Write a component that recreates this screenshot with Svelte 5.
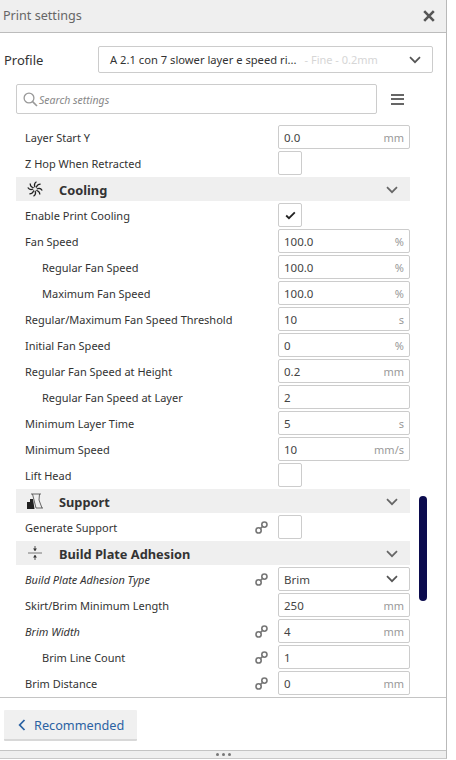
<script>
  const rows = [
    { t: 'field', label: 'Layer Start Y', value: '0.0', unit: 'mm' },
    { t: 'check', label: 'Z Hop When Retracted' },
    { t: 'head', label: 'Cooling', icon: 'fan' },
    { t: 'check', label: 'Enable Print Cooling', checked: true },
    { t: 'field', label: 'Fan Speed', value: '100.0', unit: '%' },
    { t: 'field', label: 'Regular Fan Speed', value: '100.0', unit: '%', sub: true },
    { t: 'field', label: 'Maximum Fan Speed', value: '100.0', unit: '%', sub: true },
    { t: 'field', label: 'Regular/Maximum Fan Speed Threshold', value: '10', unit: 's' },
    { t: 'field', label: 'Initial Fan Speed', value: '0', unit: '%' },
    { t: 'field', label: 'Regular Fan Speed at Height', value: '0.2', unit: 'mm' },
    { t: 'field', label: 'Regular Fan Speed at Layer', value: '2', unit: '', sub: true },
    { t: 'field', label: 'Minimum Layer Time', value: '5', unit: 's' },
    { t: 'field', label: 'Minimum Speed', value: '10', unit: 'mm/s' },
    { t: 'check', label: 'Lift Head' },
    { t: 'head', label: 'Support', icon: 'support' },
    { t: 'check', label: 'Generate Support', link: true },
    { t: 'head', label: 'Build Plate Adhesion', icon: 'adhesion' },
    { t: 'select', label: 'Build Plate Adhesion Type', value: 'Brim', link: true, it: true },
    { t: 'field', label: 'Skirt/Brim Minimum Length', value: '250', unit: 'mm' },
    { t: 'field', label: 'Brim Width', value: '4', unit: 'mm', link: true, it: true },
    { t: 'field', label: 'Brim Line Count', value: '1', unit: '', link: true, sub: true },
    { t: 'field', label: 'Brim Distance', value: '0', unit: 'mm', link: true }
  ];
</script>

{#snippet chevron(cls)}
  <svg class={cls} viewBox="0 0 12 8" width="12" height="8"><path d="M1 1.2 6 6.2 11 1.2" fill="none" stroke="currentColor" stroke-width="1.7"/></svg>
{/snippet}

{#snippet linkIcon()}
  <svg class="link" viewBox="0 0 13 13" width="13" height="13">
    <circle cx="3.6" cy="9.4" r="2.6" fill="none" stroke="#777" stroke-width="1.6"/>
    <circle cx="9.4" cy="3.6" r="2.6" fill="none" stroke="#777" stroke-width="1.6"/>
    <path d="M5 8 8 5" stroke="#777" stroke-width="1.6"/>
  </svg>
{/snippet}

<div class="panel">
  <header class="title">
    <span>Print settings</span>
    <svg viewBox="0 0 12 12" width="12" height="12"><path d="M1.2 1.2 10.8 10.8M10.8 1.2 1.2 10.8" stroke="#555" stroke-width="2.6"/></svg>
  </header>

  <div class="profile">
    <span class="plabel">Profile</span>
    <div class="pselect">
      <span class="pname">A 2.1 con 7 slower layer e speed ri...</span>
      <span class="pq">- Fine - 0.2mm</span>
      {@render chevron('pchev')}
    </div>
  </div>

  <div class="searchrow">
    <div class="search">
      <svg viewBox="0 0 15 15" width="15" height="15"><circle cx="6" cy="6" r="4.9" fill="none" stroke="#999" stroke-width="1.3"/><path d="M9.6 9.6 14 14" stroke="#999" stroke-width="1.6"/></svg>
      <span class="stext">Search settings</span>
    </div>
    <div class="menu"><i></i><i></i><i></i></div>
  </div>

  <div class="list">
    {#each rows as r}
      {#if r.t === 'head'}
        <div class="head">
          <span class="hicon">
            {#if r.icon === 'fan'}
              <svg viewBox="0 0 16 16" width="16" height="16" fill="none" stroke="#222" stroke-width="1.3">
                <path d="M8 6.2C7 4 7.5 2 9.5.8M9.8 8C12 7 14 7.5 15.2 9.5M8 9.8C9 12 8.500 14 6.500 15.200M6.200 8C4 9 2 8.500.8 6.500M9.300 6.700C9.800 4.500 11.200 3.200 13.600 3.200M9.300 9.300C11.500 9.800 12.800 11.200 12.800 13.600M6.700 9.300C6.200 11.500 4.800 12.800 2.400 12.800M6.700 6.700C4.500 6.200 3.200 4.800 3.200 2.400"/>
              </svg>
            {:else if r.icon === 'support'}
              <svg viewBox="0 0 16 16" width="16" height="16"><path d="M4 1H14M5.500 1 7 7 9 15H16M12.500 1 12 7 15 15" fill="none" stroke="#555" stroke-width=".9"/><path d="M0 16V9H3V6H6L7.500 16Z" fill="#222"/></svg>
            {:else}
              <svg viewBox="0 0 16 16" width="16" height="16"><path d="M1 8H15" stroke="#777" stroke-width="1"/><path d="M8 1V6M8 10V15" stroke="#555" stroke-width="1"/><path d="M6 3.500 8 6 10 3.500ZM6 12.500 8 10 10 12.500Z" fill="#333"/></svg>
            {/if}
          </span>
          <span class="htext">{r.label}</span>
          {@render chevron('hchev')}
        </div>
      {:else}
        <div class="row">
          <span class="label" class:sub={r.sub} class:it={r.it}>{r.label}</span>
          {#if r.link}{@render linkIcon()}{/if}
          {#if r.t === 'check'}
            <span class="box">
              {#if r.checked}<svg viewBox="0 0 12 10" width="11" height="9"><path d="M1.200 5 4.300 8 10.800 1.500" fill="none" stroke="#222" stroke-width="2"/></svg>{/if}
            </span>
          {:else if r.t === 'select'}
            <span class="input"><span>{r.value}</span>{@render chevron('schev')}</span>
          {:else}
            <span class="input"><span>{r.value}</span><span class="unit">{r.unit}</span></span>
          {/if}
        </div>
      {/if}
    {/each}
    <div class="thumb"></div>
  </div>

  <footer class="foot">
    <button class="rec">
      <svg viewBox="0 0 8 12" width="8" height="12"><path d="M6.500 1 1.700 6 6.500 11" fill="none" stroke="#2b62a3" stroke-width="1.800"/></svg>
      <span>Recommended</span>
    </button>
  </footer>
  <div class="grip"><i></i><i></i><i></i></div>
</div>

<style>
  :global(body) { margin: 0; background: #fff; }
  .panel {
    width: 447px; height: 759px; box-sizing: border-box;
    border-right: 1px solid #b9b9b9; border-bottom: 1px solid #c9c9c9;
    font-family: "Noto Sans", "Open Sans", sans-serif; color: #333;
    display: flex; flex-direction: column; overflow: hidden; background: #fff;
  }
  .title {
    height: 33px; box-sizing: border-box; flex: none; background: #efefef;
    border-bottom: 1px solid #bcbcbc; display: flex; align-items: center;
    justify-content: space-between; padding: 0 11px 1px 3px;
    font-size: 12.600px; color: #666;
  }
  .profile { flex: none; height: 51px; display: flex; align-items: center; padding: 2px 13px 0 4px; box-sizing: border-box; }
  .plabel { width: 94px; font-size: 13px; color: #333; }
  .pselect {
    flex: 1; height: 27px; box-sizing: border-box; border: 1px solid #ccc; border-radius: 2px;
    display: flex; align-items: center; padding: 0 11px; font-size: 11.200px; position: relative;
  }
  .pname { color: #333; }
  .pq { color: #d6d6d6; margin-left: 8px; font-size: 11px; }
  .pchev { position: absolute; right: 11px; top: 9px; color: #555; }
  .searchrow { flex: none; height: 30px; display: flex; align-items: center; padding-left: 16px; margin-bottom: 10px; }
  .search {
    width: 361px; height: 30px; box-sizing: border-box; border: 1px solid #ccc; border-radius: 2px;
    display: flex; align-items: center; gap: 1px; padding-left: 6px; font-size: 10.500px; font-style: italic; color: #888;
  }
  .stext { padding-top: 1px; }
  .menu { margin-left: 14px; width: 13px; display: flex; flex-direction: column; gap: 2.500px; }
  .menu i { display: block; height: 2px; background: #666; }
  .list { flex: none; height: 574px; overflow: hidden; position: relative; padding-left: 16px; border-bottom: 1px solid #c4c4c4; box-sizing: border-box; }
  .row, .head { height: 26px; width: 394px; box-sizing: border-box; display: flex; align-items: center; }
  .row { padding-left: 9px; font-size: 11px; color: #333; position: relative; }
  .label { flex: 1; white-space: nowrap; }
  .sub { padding-left: 17px; }
  .it { font-style: italic; }
  .link { position: absolute; left: 239px; top: 7px; }
  .input {
    width: 132px; height: 24px; box-sizing: border-box; border: 1px solid #ccc; border-radius: 2px; flex: none;
    display: flex; align-items: center; justify-content: space-between; padding: 0 5px; font-size: 11.500px; color: #444;
  }
  .unit { color: #999; font-size: 11px; }
  .schev { color: #555; margin-right: 6px; }
  .box {
    width: 24px; height: 24px; box-sizing: border-box; border: 1px solid #ccc; border-radius: 2px;
    margin-right: 108px; flex: none; display: flex; align-items: center; justify-content: center;
  }
  .head { background: #efefef; height: 24px; margin: 1px 0; position: relative; font-weight: 700; font-size: 12.800px; color: #333; padding-left: 11px; }
  .hicon { width: 32px; display: flex; }
  .htext { flex: 1; padding-top: 1px; }
  .hchev { position: absolute; right: 12px; top: 9px; color: #666; }
  .thumb { position: absolute; left: 419px; top: 372px; width: 8px; height: 105px; border-radius: 4px; background: #0b0b4e; }
  .foot { flex: none; height: 53px; padding: 12px 0 0 4px; box-sizing: border-box; border-bottom: 1px solid #c4c4c4; }
  .rec {
    width: 133px; height: 31px; border: 0; border-bottom: 2px solid #d8d8d8; background: #f0f0f0; padding: 0 0 0 14px;
    display: flex; align-items: center; gap: 8px; font: 12.700px "Noto Sans", "Open Sans", sans-serif; color: #2b62a3; border-radius: 1px;
  }
  .grip { flex: 1; background: #efefef; display: flex; justify-content: center; align-items: center; gap: 3px; }
  .grip i { width: 3px; height: 3px; border-radius: 50%; background: #777; }
</style>
